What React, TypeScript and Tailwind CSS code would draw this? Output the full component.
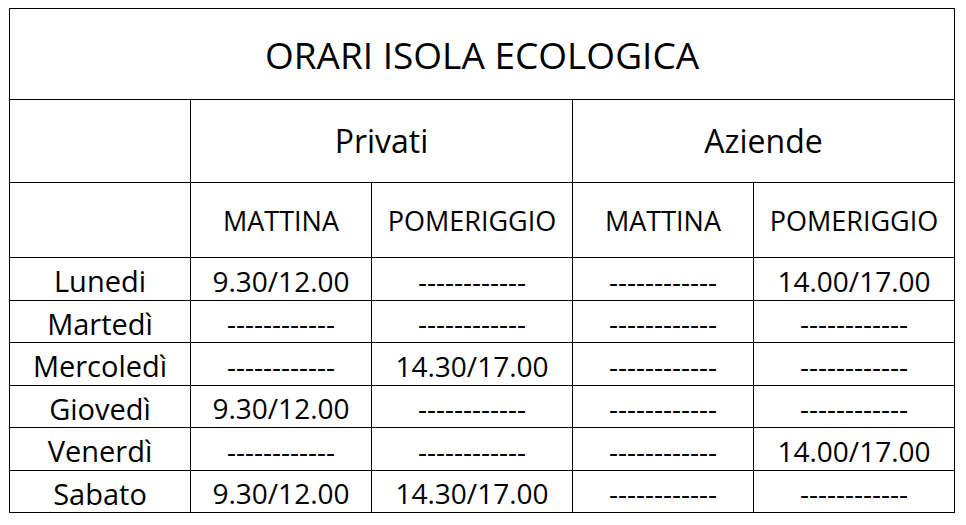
const DASH = "------------";

const rows: [string, string, string, string, string][] = [
  ["Lunedi", "9.30/12.00", DASH, DASH, "14.00/17.00"],
  ["Martedì", DASH, DASH, DASH, DASH],
  ["Mercoledì", DASH, "14.30/17.00", DASH, DASH],
  ["Giovedì", "9.30/12.00", DASH, DASH, DASH],
  ["Venerdì", DASH, DASH, DASH, "14.00/17.00"],
  ["Sabato", "9.30/12.00", "14.30/17.00", DASH, DASH],
];

const rowHeights = ["h-[43px]", "h-[42px]", "h-[43px]", "h-[42px]", "h-[43px]", "h-[42px]"];

export default function App() {
  return (
    <div
      className="h-[525px] w-[966px] overflow-hidden bg-white pl-[9px] pt-[8px] text-black"
      style={{ fontFamily: '"Open Sans", "Noto Sans", sans-serif' }}
    >
      <table className="table-fixed border-collapse">
        <colgroup>
          <col className="w-[181px]" />
          <col className="w-[181px]" />
          <col className="w-[201px]" />
          <col className="w-[181px]" />
          <col className="w-[201px]" />
        </colgroup>
        <tbody>
          <tr className="h-[91px]">
            <td colSpan={5} className="border border-black p-0 text-center text-[37px] leading-none">
              ORARI ISOLA ECOLOGICA
            </td>
          </tr>
          <tr className="h-[83px]">
            <td className="border border-black p-0" />
            <td colSpan={2} className="border border-black p-0 text-center text-[32px] leading-none">
              Privati
            </td>
            <td colSpan={2} className="border border-black p-0 text-center text-[32px] leading-none">
              Aziende
            </td>
          </tr>
          <tr className="h-[75px]">
            <td className="border border-black p-0" />
            {["MATTINA", "POMERIGGIO", "MATTINA", "POMERIGGIO"].map((h, i) => (
              <td key={i} className="border border-black p-0 text-center text-[27px] leading-none">
                {h}
              </td>
            ))}
          </tr>
          {rows.map((r, ri) => (
            <tr key={ri} className={rowHeights[ri]}>
              {r.map((c, ci) => (
                <td
                  key={ci}
                  className={
                    ci === 0
                      ? "border border-black p-0 pt-[3px] text-center text-[29px] leading-none"
                      : "border border-black p-0 pt-[3px] text-center text-[28px] leading-none"
                  }
                >
                  {c}
                </td>
              ))}
            </tr>
          ))}
        </tbody>
      </table>
    </div>
  );
}
